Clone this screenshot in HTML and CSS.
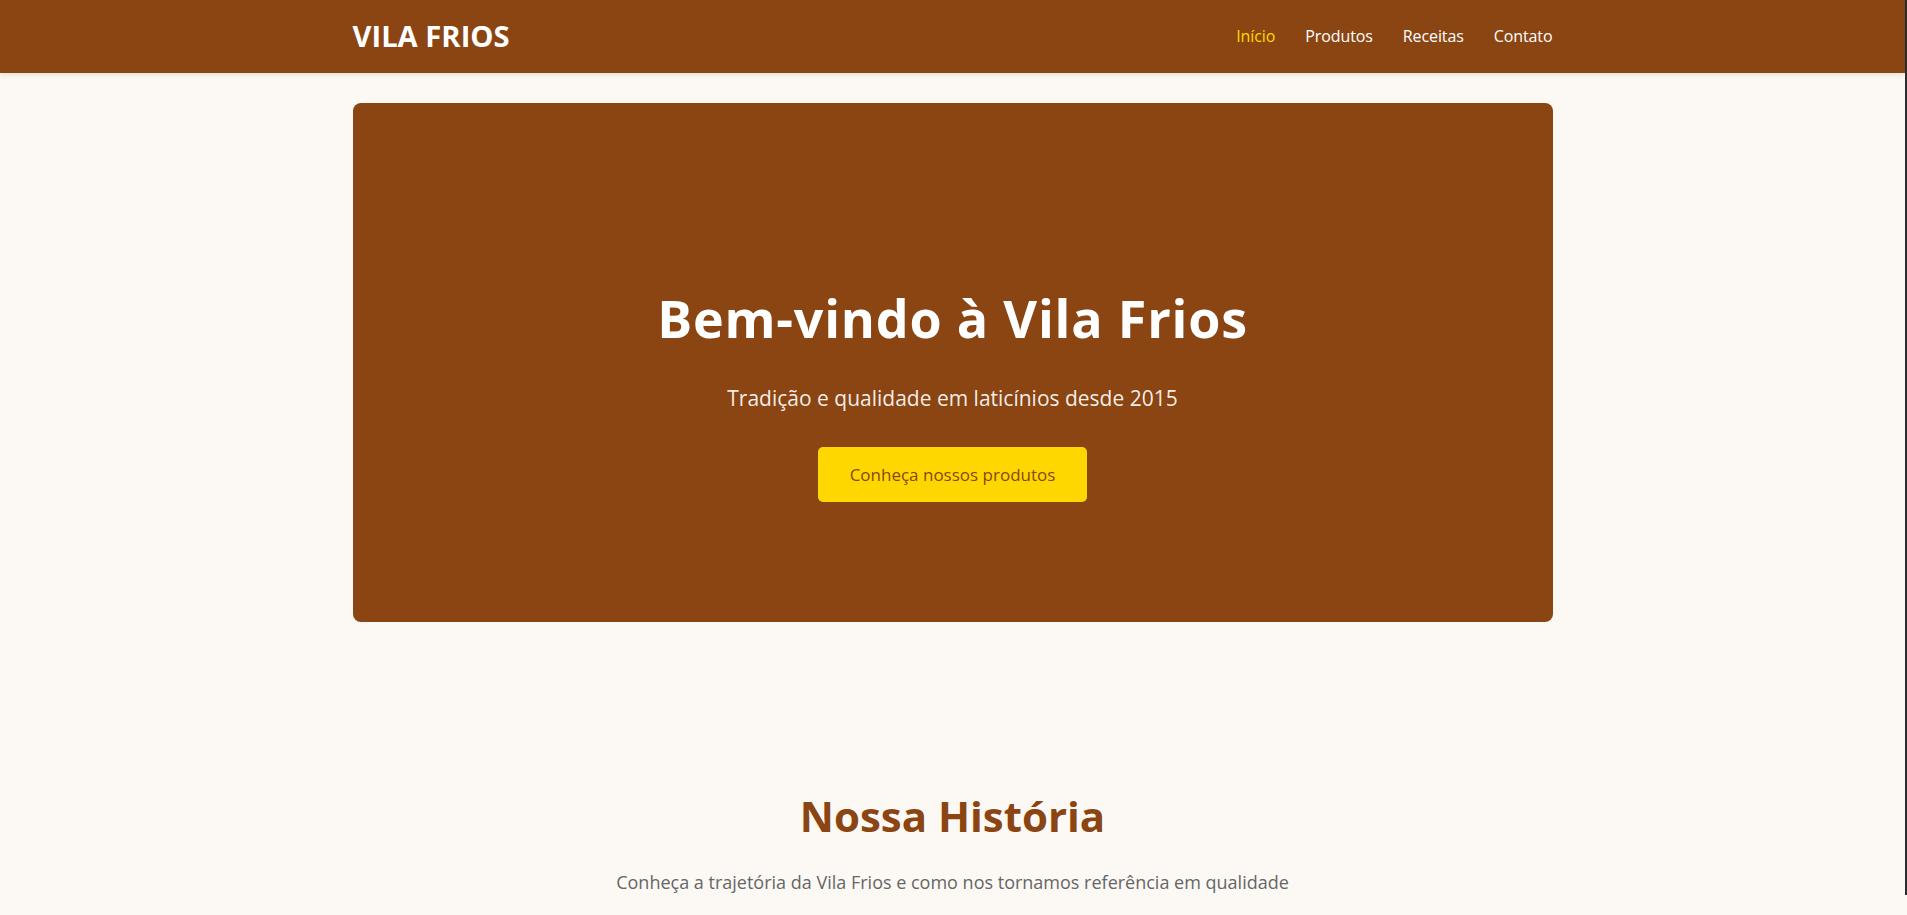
FILE: index.html
```html
<!DOCTYPE html>
<html lang="pt-BR">
<head>
<meta charset="utf-8">
<title>Vila Frios</title>
<link rel="stylesheet" href="styles.css">
</head>
<body>
<header class="site-header">
  <div class="container nav-bar">
    <div class="logo">VILA FRIOS</div>
    <nav class="nav-links">
      <a href="#" class="nav-link active">Início</a>
      <a href="#" class="nav-link">Produtos</a>
      <a href="#" class="nav-link">Receitas</a>
      <a href="#" class="nav-link">Contato</a>
    </nav>
  </div>
</header>
<main>
  <section class="container hero">
    <h1 class="hero-title">Bem-vindo à Vila Frios</h1>
    <p class="hero-sub">Tradição e qualidade em laticínios desde 2015</p>
    <a href="#" class="btn-primary">Conheça nossos produtos</a>
  </section>
  <section class="container history">
    <h2 class="section-title">Nossa História</h2>
    <p class="section-sub">Conheça a trajetória da Vila Frios e como nos tornamos referência em qualidade</p>
  </section>
</main>
</body>
</html>
```
FILE: styles.css
```css
html {
  border-right: 2px solid #2c2c2c;
  background: #fcf9f5;
}
body {
  margin: 0;
  background: #fcf9f5;
  font-family: "Open Sans", "Noto Sans", sans-serif;
  color: #333;
  overflow: hidden;
}
.container {
  width: 1200px;
  margin: 0 auto;
  box-sizing: border-box;
}
.site-header {
  background: #8b4513;
  height: 73px;
  box-shadow: 0 2px 5px rgba(0, 0, 0, 0.1);
  position: relative;
  z-index: 1;
}
.nav-bar {
  height: 100%;
  display: flex;
  align-items: center;
  justify-content: space-between;
}
.logo {
  color: #fff;
  font-weight: 700;
  font-size: 29.2px;
  line-height: 36px;
  margin-top: -2px;
}
.nav-links {
  display: flex;
  gap: 30px;
  margin-top: -2px;
}
.nav-link {
  color: #fff;
  text-decoration: none;
  font-size: 16px;
  line-height: 24px;
  letter-spacing: -0.1px;
}
.nav-link.active {
  color: #ffd700;
}
.hero {
  margin-top: 30px;
  background: #8b4513;
  border-radius: 8px;
  padding: 184px 32px 120px;
  display: flex;
  flex-direction: column;
  align-items: center;
  text-align: center;
}
.hero-title {
  margin: 0 0 35px;
  color: #fff;
  font-size: 52px;
  line-height: 62px;
  font-weight: 700;
  letter-spacing: 0.8px;
}
.hero-sub {
  margin: 0 0 34px;
  color: rgba(255, 255, 255, 0.92);
  font-size: 21px;
  line-height: 29px;
}
.btn-primary {
  display: inline-block;
  background: #ffd700;
  color: #8b4513;
  text-decoration: none;
  font-size: 17px;
  line-height: 23px;
  padding: 16px 32px;
  border-radius: 5px;
}
.history {
  padding-top: 168px;
  text-align: center;
}
.section-title {
  margin: 0 0 28px;
  color: #8b4513;
  font-size: 42px;
  line-height: 51px;
  font-weight: 700;
}
.section-sub {
  margin: 0;
  color: #666;
  font-size: 18px;
  line-height: 26px;
}
```
